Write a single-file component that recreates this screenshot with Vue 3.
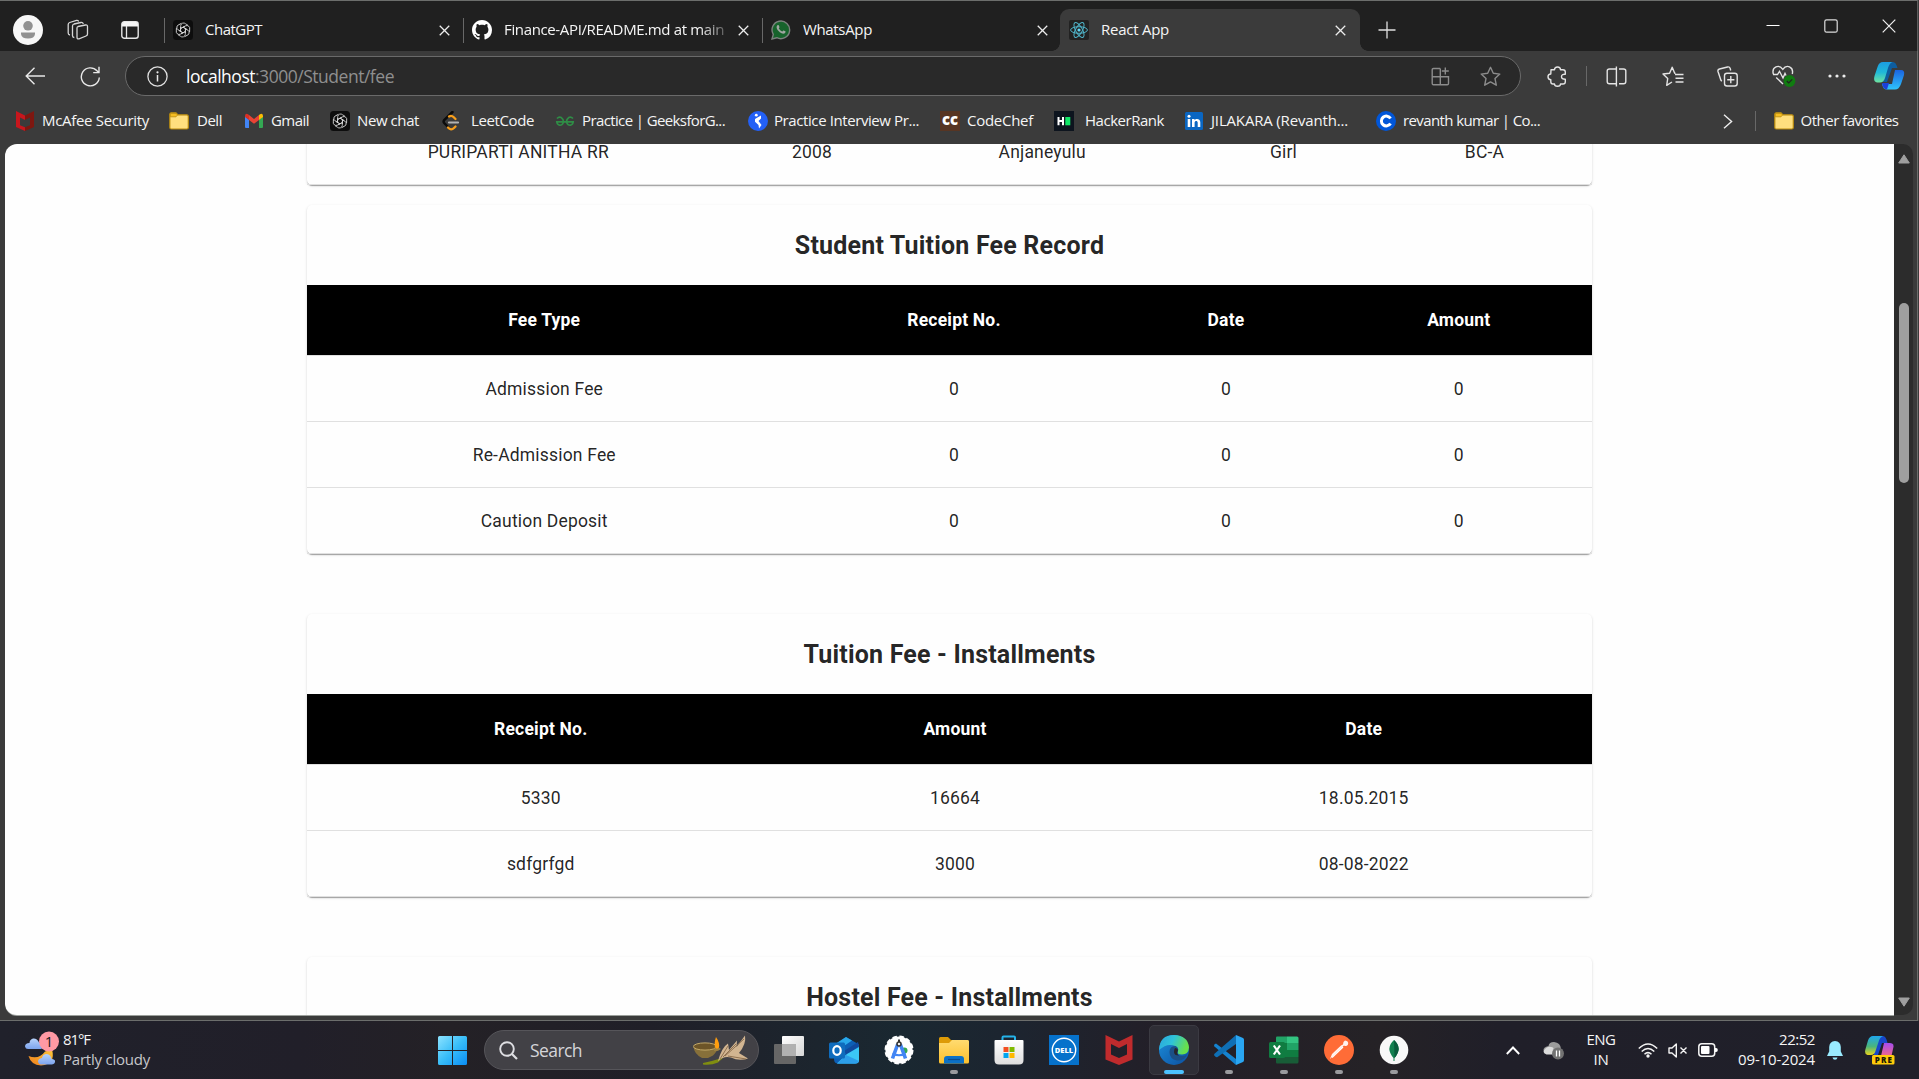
<script setup>
// Spreads a label over a set width by adjusting its letter spacing.
const vFit = {
  mounted(el, { value }) {
    const natural = el.getBoundingClientRect().width
    const count = el.textContent.trim().length
    el.style.letterSpacing = (value - natural) / count + 'px'
  }
}

const tabs = [
  { icon: 'gpt', label: 'ChatGPT', w: 57 },
  { icon: 'github', label: 'Finance-API/README.md at main', w: 220, fade: true },
  { icon: 'whatsapp', label: 'WhatsApp', w: 69 },
  { icon: 'react', label: 'React App', w: 68, active: true }
]

const bookmarks = [
  { icon: 'mcafee', label: 'McAfee Security', w: 107, slot: 154, gap: 7 },
  { icon: 'folder', label: 'Dell', w: 25, slot: 75 },
  { icon: 'gmail', label: 'Gmail', w: 38, slot: 86, gap: 7 },
  { icon: 'gpt', label: 'New chat', w: 62, slot: 111, gap: 7 },
  { icon: 'leet', label: 'LeetCode', w: 63, slot: 114, gap: 10 },
  { icon: 'gfg', label: 'Practice | GeeksforG...', w: 143, slot: 193, gap: 7 },
  { icon: 'prep', label: 'Practice Interview Pr...', w: 145, slot: 192, gap: 6 },
  { icon: 'cc', label: 'CodeChef', w: 66, slot: 114, gap: 7 },
  { icon: 'hr', label: 'HackerRank', w: 79, slot: 130, gap: 11 },
  { icon: 'linkedin', label: 'JILAKARA (Revanth...', w: 137, slot: 192, gap: 7 },
  { icon: 'coursera', label: 'revanth kumar | Co...', w: 137, slot: 170, gap: 7 }
]

const cards = [
  {
    cols: [422.5, 165, 295.5, 187, 215],
    rows: [['PURIPARTI ANITHA RR', '2008', 'Anjaneyulu', 'Girl', 'BC-A']]
  },
  {
    title: 'Student Tuition Fee Record',
    cols: [474.5, 345, 199, 266.5],
    head: ['Fee Type', 'Receipt No.', 'Date', 'Amount'],
    rows: [
      ['Admission Fee', '0', '0', '0'],
      ['Re-Admission Fee', '0', '0', '0'],
      ['Caution Deposit', '0', '0', '0']
    ]
  },
  {
    title: 'Tuition Fee - Installments',
    cols: [467.5, 361, 456.5],
    head: ['Receipt No.', 'Amount', 'Date'],
    rows: [
      ['5330', '16664', '18.05.2015'],
      ['sdfgrfgd', '3000', '08-08-2022']
    ]
  },
  { title: 'Hostel Fee - Installments', cols: [1285], rows: [] }
]
</script>

<template>
  <div class="screen">
    <svg class="defs" width="0" height="0">
      <defs>
        <linearGradient id="gWin" x1="0" y1="0" x2="1" y2="1"><stop offset="0" stop-color="#8de3ff" /><stop offset=".5" stop-color="#38bdf8" /><stop offset="1" stop-color="#0a8df5" /></linearGradient>
        <linearGradient id="gCopA" x1="0" y1="0" x2="0" y2="1"><stop offset="0" stop-color="#1b9de2" /><stop offset=".5" stop-color="#20b8d8" /><stop offset="1" stop-color="#6fe3a0" /></linearGradient>
        <linearGradient id="gCopB" x1="0" y1="0" x2="0" y2="1"><stop offset="0" stop-color="#1b63e0" /><stop offset="1" stop-color="#2fc4fa" /></linearGradient>
        <linearGradient id="gPreA" x1="0" y1="0" x2="0" y2="1"><stop offset="0" stop-color="#1fa7ee" /><stop offset=".55" stop-color="#4ab57c" /><stop offset="1" stop-color="#e9d31b" /></linearGradient>
        <linearGradient id="gPreB" x1="0" y1="0" x2="0" y2="1"><stop offset="0" stop-color="#a44cf0" /><stop offset="1" stop-color="#fb6a7c" /></linearGradient>
        <linearGradient id="gEdge" x1="0" y1="0" x2="1" y2=".3"><stop offset="0" stop-color="#2aa5e0" /><stop offset=".5" stop-color="#2fc3d8" /><stop offset="1" stop-color="#68e04c" /></linearGradient>
        <linearGradient id="gEdgeB" x1="0" y1="0" x2="1" y2="1"><stop offset="0" stop-color="#1c8fdc" /><stop offset="1" stop-color="#0c4f9e" /></linearGradient>
        <linearGradient id="gFold" x1="0" y1="0" x2="0" y2="1"><stop offset="0" stop-color="#ffdb70" /><stop offset="1" stop-color="#fbc02d" /></linearGradient>
        <linearGradient id="gCloud" x1="0" y1="0" x2="0" y2="1"><stop offset="0" stop-color="#b7d2fb" /><stop offset="1" stop-color="#7da4ee" /></linearGradient>
        <linearGradient id="gMoon" x1="0" y1="1" x2="1" y2="0"><stop offset="0" stop-color="#ee7d1b" /><stop offset="1" stop-color="#ffc83b" /></linearGradient>
        <linearGradient id="gBag" x1="0" y1="0" x2="0" y2="1"><stop offset="0" stop-color="#ffffff" /><stop offset="1" stop-color="#dedede" /></linearGradient>
        <linearGradient id="gPane" x1="0" y1="0" x2="1" y2="1"><stop offset="0" stop-color="#ffffff" /><stop offset="1" stop-color="#d6d6d6" /></linearGradient>

        <symbol id="gpt" viewBox="0 0 20 20">
          <rect width="20" height="20" rx="3.5" fill="#0d0d0d" />
          <g fill="none" stroke="#d6d6d6" stroke-width=".85">
            <path v-for="n in 6" :key="n" :transform="`rotate(${n * 60} 10 10)`" d="M10 7.2 12.5 8.700V13M7.700 8.700V5.600A2.900 2.900 0 0 1 12.600 3.800L15 5.300" />
          </g>
        </symbol>
        <symbol id="github" viewBox="0 0 16 16"><path fill="#fff" d="M8 0C3.58 0 0 3.58 0 8c0 3.54 2.29 6.53 5.47 7.59.4.07.55-.17.55-.38 0-.19-.01-.82-.01-1.49-2.01.37-2.53-.49-2.69-.94-.09-.23-.48-.94-.82-1.13-.28-.15-.68-.52-.01-.53.63-.01 1.08.58 1.23.82.72 1.21 1.87.87 2.33.66.07-.52.28-.87.51-1.07-1.78-.2-3.64-.89-3.64-3.95 0-.87.31-1.59.82-2.15-.08-.2-.36-1.02.08-2.12 0 0 .67-.21 2.2.82.64-.18 1.32-.27 2-.27s1.36.09 2 .27c1.53-1.04 2.2-.82 2.2-.82.44 1.1.16 1.92.08 2.12.51.56.82 1.27.82 2.15 0 3.07-1.87 3.75-3.65 3.95.29.25.54.73.54 1.48 0 1.07-.01 1.93-.01 2.2 0 .21.15.46.55.38A8.01 8.01 0 0 0 16 8c0-4.42-3.58-8-8-8Z" /></symbol>
        <symbol id="whatsapp" viewBox="0 0 20 20"><path d="M1 19 2.3 14.4A8.8 8.8 0 1 1 5.800 17.700Z" fill="#17632c" stroke="#7b817d" stroke-width="1.400" /><path d="M6.500 5.300c.5-.5 1.100-.4 1.300.1l.7 1.600c.1.400-.5 1-.7 1.300.7 1.500 2 2.600 3.500 3.200.5-.4.9-1.200 1.300-1.100l1.800.9c.4.3 0 1.400-.6 1.900-1.300.9-3.300.3-5-1C7 10.800 5.800 9 5.600 7.500c-.1-1 .4-1.800.9-2.200Z" fill="#a0a6a1" /></symbol>
        <symbol id="react" viewBox="0 0 20 20"><rect width="20" height="20" rx="2" fill="#222" /><g fill="none" stroke="#4fb4c9" stroke-width="1"><ellipse cx="10" cy="10" rx="8.400" ry="3.300" /><ellipse cx="10" cy="10" rx="8.400" ry="3.300" transform="rotate(60 10 10)" /><ellipse cx="10" cy="10" rx="8.400" ry="3.300" transform="rotate(120 10 10)" /></g><circle cx="10" cy="10" r="1.600" fill="#61dafb" /></symbol>
        <symbol id="mcafee" viewBox="0 0 20 20"><path d="M1 0 10 4.500V9L5 6.500v7.700l5 2V20l-9-4Z" fill="#c8161d" /><path d="M19 0 10 4.500V9l5-2.500v7.700l-5 2V20l9-4Z" fill="#7e1710" /></symbol>
        <symbol id="folder" viewBox="0 0 20 20"><path d="M1 3Q1 1.800 2.200 1.800H7L9 3.800H17.800Q19.300 3.800 19.300 5.200V16.500Q19.300 18 17.800 18H2.300Q.8 18 .8 16.500V3Z" fill="#ffdf7e" stroke="#b98a0c" stroke-width="1.200" /><path d="M1.300 2.400H7L8.600 4 7 5.800H1.300Z" fill="#f5bd22" stroke="#b98a0c" stroke-width=".8" /></symbol>
        <symbol id="gmail" viewBox="0 0 20 20"><path d="M1 5.500 5 8.500V17H2Q1 17 1 16Z" fill="#4285f4" /><path d="M19 5.500 15 8.500V17h3q1 0 1-1Z" fill="#34a853" /><path d="M5 4 10 8 15 4V9L10 12.800 5 9Z" fill="#ea4335" /><path d="M1 5Q1.200 2 4 3.200L5 4V9L1 6Z" fill="#d93025" /><path d="M19 5Q18.800 2 16 3.200L15 4V9L19 6Z" fill="#fbbc04" /></symbol>
        <symbol id="leet" viewBox="0 0 20 20"><path d="M11.500 1 3.200 9Q2 10.500 3.200 12L8 17" fill="none" stroke="#0b0b0b" stroke-width="2.500" stroke-linecap="round" /><path d="M8 5.500Q10.500 4 12.500 6L14.500 8M7 16.500Q10 20 13 17L14.500 15.500" fill="none" stroke="#f79e1b" stroke-width="2.300" stroke-linecap="round" /><path d="M8 11.500H17" stroke="#b3b3b3" stroke-width="2.200" stroke-linecap="round" /></symbol>
        <symbol id="gfg" viewBox="0 0 20 20"><g fill="none" stroke="#2f8d46" stroke-width="1.700"><path d="M2 7.500Q4 5.500 6.300 6.600 8.800 8.500 8.400 11.500 7 14.600 4.500 14.200 2 13.500 1.800 10.800H10" /><path d="M18 7.500Q16 5.500 13.700 6.600 11.200 8.500 11.600 11.500 13 14.600 15.500 14.200 18 13.500 18.200 10.800H10" /></g></symbol>
        <symbol id="prep" viewBox="0 0 20 20"><circle cx="10" cy="10" r="10" fill="#2360f6" /><circle cx="8.300" cy="4.200" r="1.400" fill="#fff" /><path d="M13 4.500V7.500L10.500 10 13.500 14 11 17.500 10.500 14 7 10.800V8L9.500 6.500Z" fill="#fff" /></symbol>
        <symbol id="cc" viewBox="0 0 20 20"><rect width="20" height="20" fill="#573523" /><text x="10" y="14" text-anchor="middle" class="mark" font-size="15" textLength="16" lengthAdjust="spacingAndGlyphs">cc</text></symbol>
        <symbol id="hr" viewBox="0 0 20 20"><rect width="20" height="20" fill="#0d141e" /><path d="M3.500 6h2v3h2.500V6h2v8.300H8V11H5.500v3.300h-2Z" fill="#fff" /><rect x="11.300" y="6" width="5" height="8.300" fill="#0fe666" /></symbol>
        <symbol id="linkedin" viewBox="0 0 20 20"><rect x="1" y="1" width="18" height="18" rx="1.500" fill="#0a66c2" /><circle cx="5" cy="5.200" r="1.500" fill="#fff" /><path d="M3.700 8h2.600v8H3.700ZM8 8h2.500v1.100C11.800 7.200 16.300 7.300 16.300 11.300V16h-2.600v-4.200c0-2.400-3.100-2.200-3.100 0V16H8Z" fill="#fff" /></symbol>
        <symbol id="coursera" viewBox="0 0 20 20"><circle cx="10" cy="10" r="10" fill="#0156d8" /><path d="M14.500 7.500A4.900 4.900 0 1 0 14.500 12.500" fill="none" stroke="#fff" stroke-width="3" /></symbol>
        <symbol id="x" viewBox="0 0 12 12"><path d="M.8.8 11.200 11.200M11.200.8.8 11.200" stroke="#ededed" stroke-width="1.400" fill="none" /></symbol>
      </defs>
    </svg>

    <header class="tabstrip">
      <svg class="profile" width="30" height="30" viewBox="0 0 30 30"><circle cx="15" cy="15" r="15" fill="#f7f7f7" /><circle cx="15" cy="10.800" r="4.800" fill="#919191" /><path d="M8 17.500H22V19Q21.500 23.500 15 23.500T8 19Z" fill="#919191" /></svg>
      <svg class="spaces" width="22" height="22" viewBox="0 0 22 22" fill="none" stroke="#d6d6d6" stroke-width="1.300"><path d="M11 7.500 18.500 6Q20.500 5.700 20.500 7.500V15Q20.500 16.500 19 17L12 19.800Q10 20.300 10 18.300V9Q10 7.800 11 7.500Z" /><path d="M7.300 18.500Q5.500 18.500 5.500 16.800V7Q5.500 5.500 7 5L14 3.500Q16 3.200 16.200 5" /><path d="M3 16Q1.200 15.800 1.200 14V5.500Q1.200 4 2.700 3.500L9.500 1.400Q11.300 1 11.700 2.500" /></svg>
      <svg class="tabact" width="18" height="18" viewBox="0 0 18 18"><rect x=".8" y=".8" width="16.400" height="16.400" rx="2.500" fill="none" stroke="#e6e6e6" stroke-width="1.400" /><path d="M1 3Q1 1 3 1H15Q17 1 17 3V5.500H1Z" fill="#f5f5f5" /><path d="M5.500 5V17" stroke="#e6e6e6" stroke-width="1.300" /></svg>
      <div v-for="t in tabs" :key="t.label" class="tab" :class="{ active: t.active }">
        <svg width="20" height="20"><use :href="'#' + t.icon" /></svg>
        <span class="tablabel" :class="{ fade: t.fade }"><span v-fit="t.w">{{ t.label }}</span></span>
        <svg class="tabx" width="11" height="11"><use href="#x" /></svg>
      </div>
      <svg class="plus" width="18" height="18" viewBox="0 0 18 18"><path d="M9 .5V17.500M.5 9H17.500" stroke="#e0e0e0" stroke-width="1.300" /></svg>
      <div class="winctl">
        <svg width="14" height="14" viewBox="0 0 14 14"><path d="M.5 6.500H13.500" stroke="#fff" stroke-width="1" /></svg>
        <svg width="14" height="14" viewBox="0 0 14 14"><rect x=".8" y=".8" width="12.400" height="12.400" rx="1.800" fill="none" stroke="#dcdcdc" stroke-width="1.200" /></svg>
        <svg width="14" height="14" viewBox="0 0 14 14"><path d="M.7.7 13.300 13.300M13.300.7.7 13.300" stroke="#f0f0f0" stroke-width="1.200" /></svg>
      </div>
    </header>

    <div class="toolbar">
      <svg class="back" width="20" height="18" viewBox="0 0 20 18" fill="none" stroke="#e8e8e8" stroke-width="1.400"><path d="M9.500.8 1.200 9 9.500 17.200M1.200 9H20" /></svg>
      <svg class="reload" width="21" height="21" viewBox="0 0 21 21" fill="none" stroke="#e8e8e8" stroke-width="1.400"><path d="M19.300 11.500A9 9 0 1 1 17 4.800L18.700 6.500M19 .8V6.600H13.200" /></svg>
      <div class="address">
        <svg class="info" width="21" height="21" viewBox="0 0 21 21"><circle cx="10.500" cy="10.500" r="9.600" fill="none" stroke="#e0e0e0" stroke-width="1.300" /><path d="M10.500 9V15.500" stroke="#e8e8e8" stroke-width="1.500" /><circle cx="10.500" cy="6.300" r="1.100" fill="#e8e8e8" /></svg>
        <span class="url"><b v-fit="69">localhost</b><i v-fit="139">:3000/Student/fee</i></span>
        <svg class="addapp" width="19" height="19" viewBox="0 0 19 19" fill="none" stroke="#8c8c8c" stroke-width="1.400"><path d="M9.200 1.500H2.500Q1.200 1.500 1.200 2.800V16.500Q1.200 17.800 2.500 17.800H16.200Q17.500 17.800 17.500 16.500V9.700H1.200M9.300 1.500V17.800M14.300.5V7.500M10.800 4H17.800" /></svg>
        <svg class="star" width="21" height="21" viewBox="0 0 21 21" fill="none" stroke="#8c8c8c" stroke-width="1.400"><path d="M10.500 1.300 13.300 7.300 19.800 8.100 15 12.600 16.300 19.200 10.500 15.900 4.700 19.200 6 12.600 1.200 8.100 7.700 7.300Z" stroke-linejoin="round" /></svg>
      </div>
      <svg class="puzzle" width="21" height="21" viewBox="0 0 21 21" fill="none" stroke="#e4e4e4" stroke-width="1.400"><path d="M4 3.800H7.500Q7.500 1 10.500 1T13.500 3.800H16Q18.300 3.800 18.300 6V8.300Q14.500 8 14.500 10.700T18.300 13.300V15.800Q18.300 18 16 18H13.500Q13.500 20.300 10.500 20.300T7.500 18H6Q3.800 18 3.800 15.800V13.600Q1 13.600 1 10.800T3.800 8Z" stroke-linejoin="round" /></svg>
      <span class="sep"></span>
      <svg class="split" width="21" height="21" viewBox="0 0 21 21" fill="none" stroke="#e4e4e4" stroke-width="1.400"><path d="M7.700 3H3.500Q1.200 3 1.200 5V15.500Q1.200 17.800 3.500 17.800H7.700M13 3H17.500Q19.800 3 19.800 5V15.500Q19.800 17.800 17.500 17.800H13M7.500 3H10.400M7.500 17.800H10.400M10.400.5V20.500" /></svg>
      <svg class="favs" width="22" height="21" viewBox="0 0 22 21" fill="none" stroke="#e4e4e4" stroke-width="1.400" stroke-linejoin="round"><path d="M13.500 7.300H12.700L10.200 1.200 7.600 7.200 1 8 5.700 12.500 4.700 19.300 10 16M13 8.500H21.500M13.500 12.300H21.500M13.500 16H21.500" /></svg>
      <svg class="coll" width="21" height="21" viewBox="0 0 21 21" fill="none" stroke="#e4e4e4" stroke-width="1.400"><rect x="7.500" y="7.300" width="12.700" height="12.700" rx="2.500" /><path d="M13.800 10V17.300M10.200 13.700H17.400M4.800 15.300Q3.800 14.500 3.500 13L1 5.500Q.5 3.500 2.500 3L10.500 1Q12.500.5 13.200 2.500L13.700 4.500" /></svg>
      <svg class="heart" width="24" height="22" viewBox="0 0 24 22" fill="none" stroke="#e4e4e4" stroke-width="1.400"><path d="M1.300 9Q0 3.500 4 1.800 8 .3 10.800 4.300 13.500.3 17.500 1.800 21.500 3.500 20.300 9M1 9.500H5.500L7.500 6.300 11 13 13 8.500 14 10.500M4.200 12.500 11 19" /><circle cx="17.500" cy="16" r="5.900" fill="#107c10" stroke="none" /><path d="M14.800 16 16.700 18 20.200 14.300" stroke="#222" stroke-width="1.200" /></svg>
      <svg class="dots" width="18" height="4" viewBox="0 0 18 4" fill="#ececec"><circle cx="2" cy="2" r="1.600" /><circle cx="9" cy="2" r="1.600" /><circle cx="16" cy="2" r="1.600" /></svg>
      <svg class="copilot" width="31" height="28" viewBox="0 0 31 28"><path d="M9 0H19Q22 0 23.500 6H18L13 20H9L12 4Z" fill="#0e5d9e" /><path d="M8 22H18L21 8H27Q31 8 30 13L27 22Q25 27.500 21 27.500H13Q9 27.500 8 22Z" fill="url(#gCopB)" /><path d="M8 21H15L13 27.500Q9 27.500 8 21Z" fill="#1c3fd8" /><path d="M9 0H18.500Q15.500 1 14 6L11 16Q9.500 20.500 6 20.500H3Q-1 20 .5 14L3.500 5Q5 0 9 0Z" fill="url(#gCopA)" /></svg>
    </div>

    <nav class="bookmarks">
      <div v-for="b in bookmarks" :key="b.label" class="bm" :style="{ width: b.slot + 'px' }">
        <svg width="20" height="20"><use :href="'#' + b.icon" /></svg>
        <span class="bmlabel" :style="{ marginLeft: (b.gap || 8) + 'px' }"><span v-fit="b.w">{{ b.label }}</span></span>
      </div>
      <svg class="more" width="10" height="15" viewBox="0 0 10 15"><path d="M1 .8 8.600 7.500 1 14.200" fill="none" stroke="#eee" stroke-width="1.400" /></svg>
      <span class="sep bmsep"></span>
      <div class="bm other"><svg width="20" height="20"><use href="#folder" /></svg><span class="bmlabel otherlabel"><span v-fit="98">Other favorites</span></span></div>
    </nav>

    <div class="body">
      <main class="page">
        <section v-for="(c, i) in cards" :key="i" class="card">
          <h2 v-if="c.title">{{ c.title }}</h2>
          <div v-if="c.head" class="row head">
            <span v-for="(h, j) in c.head" :key="j" :style="{ width: c.cols[j] + 'px' }">{{ h }}</span>
          </div>
          <div v-for="(r, k) in c.rows" :key="k" class="row">
            <span v-for="(v, j) in r" :key="j" :style="{ width: c.cols[j] + 'px' }">{{ v }}</span>
          </div>
        </section>
      </main>
      <aside class="scroll">
        <svg width="12" height="10" viewBox="0 0 12 10"><path d="M6 .8 11.300 9H.7Z" fill="#9f9f9f" stroke="#9f9f9f" stroke-linejoin="round" /></svg>
        <span class="thumb"></span>
        <svg width="12" height="10" viewBox="0 0 12 10"><path d="M6 9.200 11.300 1H.7Z" fill="#9f9f9f" stroke="#9f9f9f" stroke-linejoin="round" /></svg>
      </aside>
    </div>

    <footer class="taskbar">
      <div class="weather">
        <svg width="36" height="38" viewBox="0 0 36 38">
          <path d="M3 18H16Q19 17 18 13.500 16.500 11 14 11.500 12 7 8 7.500 4.500 8.500 4.500 12 0 12 0 15.500 .5 18 3 18Z" fill="url(#gCloud)" />
          <path d="M27 18.500Q31 33 16 34.500 6 34 3.500 25 14 29 20 20.500Z" fill="url(#gMoon)" />
          <path d="M16 33.500H27Q30.500 33 30 29.500 28.500 27.500 26.500 28 25.500 23 21 23 17.500 23.500 17 27 13 27.500 13 30.500 13.500 33.500 16 33.500Z" fill="url(#gCloud)" />
          <circle cx="24" cy="10.500" r="10" fill="#ff99a4" /><text x="24" y="15.500" text-anchor="middle" class="badge">1</text>
        </svg>
        <div class="wtext"><span><span v-fit="27">81°F</span></span><span class="dim"><span v-fit="87">Partly cloudy</span></span></div>
      </div>
      <svg class="start" width="29" height="29" viewBox="0 0 29 29"><path d="M0 1.500Q0 0 1.500 0H14V14H0ZM15 0H27.500Q29 0 29 1.500V14H15ZM0 15H14V29H1.500Q0 29 0 27.500ZM15 15H29V27.500Q29 29 27.500 29H15Z" fill="url(#gWin)" /></svg>
      <div class="search">
        <svg width="19" height="19" viewBox="0 0 19 19" fill="none" stroke="#dedee2"><circle cx="8" cy="8" r="6.800" stroke-width="1.900" /><path d="M13 13 18 18" stroke-width="2.200" /></svg>
        <span class="slabel"><span v-fit="52">Search</span></span>
        <svg class="lamp" width="57" height="32" viewBox="0 0 57 32">
          <path d="M10 29Q20 27 27 24.500L31 23 25 28.500Q18 31.500 10 30.500Z" fill="#808d10" />
          <path d="M25 27Q29 13 35 9.500L36 16 44 6.500 43.500 13 52 1.500Q53.500 10 46 19L55 24.500Q46 27.500 38 23.500 31 21.500 25 27Z" fill="#d2b591" />
          <path d="M27 25 35 12M30 23 43 10M32 22 51 5M35 22 53 25" stroke="#8f7150" stroke-width="1" fill="none" />
          <path d="M.5 12.500H24Q25 17 20 21.500L15 24H9Q1 20 .5 12.500Z" fill="#87703a" /><ellipse cx="12" cy="12.500" rx="11.700" ry="3.600" fill="#6d5528" stroke="#c3a968" stroke-width="1" />
          <path d="M22 11 28 15Q24 18 21 17Z" fill="#9c8142" /><path d="M23 3Q27 9 26 13.500 24.500 15.500 22.500 14 20.500 10 23 3Z" fill="#ff9e0e" />
        </svg>
      </div>
      <div class="apps">
        <div class="app"><svg width="30" height="28" viewBox="0 0 30 28"><rect x="8" y="0" width="22" height="20" rx="1" fill="url(#gPane)" /><rect x="0" y="8" width="22" height="20" rx="1" fill="#666" /><path d="M8 8H22V20H8Z" fill="#b1b1b1" /></svg></div>
        <div class="app"><svg width="30" height="28" viewBox="0 0 30 28"><path d="M5 9 17 1 30 8.500V24Q30 27.500 26.500 27.500H9Q5 27.500 5 23Z" fill="#0d5fb5" /><path d="M7 7.500 17 1 23 4.500 12 12Z" fill="#28a8ea" /><path d="M15 15 29 6 30 10 18 19Z" fill="#104a9e" /><path d="M30 11V24Q30 27.500 26.500 27.500H8L18 18Z" fill="#3bc8f5" /><path d="M8 27.500 17 19 30 25Q29 27.500 26 27.500Z" fill="#2d9fea" /><rect x="0" y="6.500" width="16" height="16" rx="1.500" fill="#0f6cbd" /><ellipse cx="8" cy="14.500" rx="3.700" ry="4.400" fill="none" stroke="#fff" stroke-width="2.200" /></svg></div>
        <div class="app"><svg width="30" height="30" viewBox="0 0 30 30"><circle cx="15" cy="15" r="13.600" fill="#fff" /><circle cx="15" cy="15" r="13.500" fill="none" stroke="#fff" stroke-width="2" stroke-dasharray="4.500 2.570" /><circle cx="20.500" cy="15.500" r="3" fill="#34a853" /><path d="M13.800 9 8.500 23.500M16.200 9 21.500 23.500" stroke="#4285f4" stroke-width="3.600" /><path d="M8.500 18.500Q15 22 21.500 18.500" fill="none" stroke="#4285f4" stroke-width="2.200" /><circle cx="15" cy="9" r="2" fill="#eee" stroke="#333" stroke-width="1.500" /><path d="M15 4.500V7" stroke="#333" stroke-width="2" /></svg></div>
        <div class="app"><svg width="30" height="30" viewBox="0 0 30 30"><path d="M0 3.500Q0 2 1.500 2H9L12 5H28Q30 5 30 7V14H0Z" fill="#dd9b07" /><path d="M0 8H10L13 5H28.500Q30 5 30 6.500V27Q30 28.500 28.500 28.500H1.500Q0 28.500 0 27Z" fill="url(#gFold)" /><path d="M5 28.500V24Q5 21 8 21H22Q25 21 25 24V28.500Z" fill="#0b71c6" /><path d="M9 24.500H21" stroke="#0a4c8e" stroke-width="1.200" /></svg><i class="ind"></i></div>
        <div class="app"><svg width="30" height="30" viewBox="0 0 30 30"><path d="M8.500 6V2.500Q8.500 1.500 9.500 1.500H20Q21 1.500 21 2.500V6" fill="none" stroke="#24b3ea" stroke-width="2" /><path d="M.5 6Q.5 5 1.500 5H28.500Q29.500 5 29.500 6V25Q29.500 29.500 25 29.500H5Q.5 29.500 .5 25Z" fill="url(#gBag)" /><path d="M9.500 12H14.500V17H9.500Z" fill="#f25022" /><path d="M15.500 12H20.500V17H15.500Z" fill="#7fba00" /><path d="M9.500 18H14.500V23H9.500Z" fill="#00a4ef" /><path d="M15.500 18H20.500V23H15.500Z" fill="#ffb900" /></svg></div>
        <div class="app"><svg width="30" height="30" viewBox="0 0 30 30"><rect width="30" height="30" fill="#0672cb" /><circle cx="15" cy="15" r="11.700" fill="none" stroke="#fff" stroke-width="1.400" /><text x="15" y="17.600" text-anchor="middle" class="mark" font-size="7" textLength="18.500" lengthAdjust="spacingAndGlyphs">DELL</text></svg></div>
        <div class="app"><svg width="28" height="30" viewBox="0 0 28 30"><path d="M.5 0 14 6.500 27.500 0V24.500L14 30 .5 24.500ZM6 9V19.500L14 23 22 19.500V9L14 13Z" fill="#c02b2d" fill-rule="evenodd" /></svg></div>
        <div class="app on"><svg width="30" height="30" viewBox="0 0 30 30"><circle cx="15" cy="15" r="15" fill="url(#gEdgeB)" /><path d="M0 15Q.5 0 15 0 29 .5 30 12.500 29.500 19.500 23 19.500 17.500 19.500 19 16 20 13 16.500 11 8 7.500 0 15Z" fill="url(#gEdge)" /><path d="M10.500 17Q10.500 11 16.500 11 20.500 13.500 18.500 16.500 17 20.500 23 21 26 21 28 19.500 25.500 26 18 25.500 10.500 24 10.500 17Z" fill="#1b4f87" /><path d="M16 13Q20 13.500 18.500 16.500 17.500 19 20 20.500 15 20.500 15 17 15 14.500 16 13Z" fill="#26262e" /></svg><i class="ind wide"></i></div>
        <div class="app"><svg width="30" height="30" viewBox="0 0 30 30"><path d="M2 8.500 22 24V30L.5 11.500Q-.5 10 .7 9.200Z" fill="#1583d0" /><path d="M22 0V9L3.500 22Q2.500 22.500 1.500 21.800L.5 20.800Q-.3 19.800 .5 18.800Z" fill="#0f6fb5" /><path d="M22 0 29 3Q30 3.600 30 5V25Q30 26.400 29 27L22 30Z" fill="#2aa6f2" /></svg><i class="ind"></i></div>
        <div class="app"><svg width="30" height="28" viewBox="0 0 30 28"><path d="M7 1.500Q7 .5 8 .5H18V7H7Z" fill="#21a366" /><path d="M18 .5H28Q29.500 .5 29.500 2V7H18Z" fill="#33c481" /><path d="M7 7H18V21H7Z" fill="#107c41" /><path d="M18 7H29.500V14H18Z" fill="#21a366" /><path d="M18 14H29.500V21H18Z" fill="#107c41" /><path d="M7 21H29.500V26Q29.500 27.500 28 27.500H8Q7 27.500 7 26Z" fill="#185c37" /><rect x="0" y="6" width="16" height="16" rx="1.500" fill="#107c41" /><path d="M4.800 9.500 11 18.500M11 9.500 4.800 18.500" stroke="#fff" stroke-width="2.200" /></svg><i class="ind"></i></div>
        <div class="app"><svg width="30" height="30" viewBox="0 0 30 30"><circle cx="15" cy="15" r="15" fill="#ff6c37" /><path d="M21 5.500Q25 6 24 9.500 22.500 12 20 10.500L12 18 6 24 8 19 17 10.500 19 9.500Q19 6.500 21 5.500Z" fill="#fff" opacity=".92" /><path d="M8 22.500 19 12" stroke="#fff" stroke-width="1.300" /></svg><i class="ind"></i></div>
        <div class="app"><svg width="30" height="30" viewBox="0 0 30 30"><circle cx="15" cy="15" r="14.300" fill="#f8f8f8" /><path d="M15 5Q24 13 15.500 23V26H14.500V23Q6 13 15 5Z" fill="#12804f" /><path d="M15 5Q24 13 15.500 23Z" fill="#0a5c3c" /></svg><i class="ind"></i></div>
      </div>
      <svg class="chev" width="14" height="9" viewBox="0 0 14 9"><path d="M.8 8 7 1.500 13.200 8" fill="none" stroke="#fff" stroke-width="1.900" /></svg>
      <svg class="cloud" width="21" height="19" viewBox="0 0 21 19"><path d="M3 12H13L18 8Q17.500 1.500 11 1 6 1 5.500 5 0 6 .5 9.500Z" fill="#9b9b9b" /><path d="M3.500 13.500H13L10 6.500Q5 4.500 2 8-1.500 12 3.500 13.500Z" fill="#dcdcdc" /><circle cx="15" cy="12.500" r="6" fill="#727272" /><path d="M13.500 9.500V15.500M16.500 9.500V15.500" stroke="#fff" stroke-width="1.300" /></svg>
      <div class="lang"><span><span v-fit="29">ENG</span></span><span><span v-fit="15">IN</span></span></div>
      <svg class="wifi" width="20" height="15" viewBox="0 0 20 15" fill="none" stroke="#f4f4f4" stroke-width="1.500"><path d="M.8 5.500Q10-3.500 19.200 5.500M3.700 8.500Q10 2.500 16.300 8.500M6.500 11.300Q10 8 13.500 11.300" /><circle cx="10" cy="13" r="1.700" fill="#f4f4f4" stroke="none" /></svg>
      <svg class="mute" width="20" height="15" viewBox="0 0 20 15" fill="none" stroke="#f4f4f4" stroke-width="1.400"><path d="M1 5H4L8.300 1V14L4 10H1ZM12.500 4.500 18.500 10.500M18.500 4.500 12.500 10.500" stroke-linejoin="round" /></svg>
      <svg class="batt" width="20" height="14" viewBox="0 0 20 14"><rect x=".8" y=".8" width="15.900" height="12.400" rx="3" fill="none" stroke="#f4f4f4" stroke-width="1.500" /><rect x="3" y="3" width="8.500" height="8" rx="1" fill="#fff" /><path d="M17 5H18Q19.800 5 19.800 7T18 9H17Z" fill="#fff" /></svg>
      <div class="clock"><span><span v-fit="36">22:52</span></span><span><span v-fit="77">09-10-2024</span></span></div>
      <svg class="bell" width="16" height="19" viewBox="0 0 16 19"><path d="M8 0Q13.500 .5 13.800 6V10.500L16 15H0L2.200 10.500V6Q2.500 .5 8 0ZM5.500 16.500H10.500Q10 18.700 8 18.700T5.500 16.500Z" fill="#99ebff" /></svg>
      <svg class="pre" width="30" height="29" viewBox="0 0 30 29"><path d="M9 0H18Q21 0 22.500 7H17L13 19H9Z" fill="#1647c9" /><path d="M10 20H16L19 7H25Q30 7 28 13L26 22H10Z" fill="url(#gPreB)" /><path d="M8 0H18Q14.500 1.500 13.500 6L10.500 15Q9.500 19 6 19H2.500Q-1 18.500 .5 13L3 4.500Q4.500 0 8 0Z" fill="url(#gPreA)" /><rect x="7" y="19" width="22.500" height="9.500" rx="1.500" fill="#ffcb0a" /><text x="18.300" y="26.800" text-anchor="middle" class="pretext" textLength="17">PRE</text></svg>
    </footer>
  </div>
</template>

<style>
html, body { margin: 0; background: #000; overflow: hidden; }
</style>

<style scoped>
* { box-sizing: border-box; }
svg { display: block; flex: none; }
.screen { width: 1919px; height: 1079px; display: flex; flex-direction: column; background: #3b3b3b; color: #f5f5f5; font: 15px/20px "Open Sans", "Noto Sans", sans-serif; overflow: hidden; white-space: nowrap; }
.defs { position: absolute; }
.mark { font-family: "Open Sans", sans-serif; font-weight: 800; fill: #fff; }

.tabstrip { height: 51px; width: 1918px; flex: none; background: #202020; border-top: 1px solid #6c6e6c; border-right: 1px solid #5d5d5d; display: flex; align-items: center; padding: 8px 21px 0 13px; }
.spaces { margin-left: 24px; }
.tabact { margin-left: 32px; margin-right: 25px; }
.tab { width: 299px; height: 42px; display: flex; align-items: center; padding-left: 8px; border-left: 1px solid transparent; position: relative; }
.tab:not(.active)::before { content: ""; position: absolute; left: -1px; top: 9px; width: 1px; height: 25px; background: #686868; }
.tab.active { width: 300px; margin-left: -1px; background: #3b3b3b; border-radius: 9px 9px 0 0; border: 0; padding-left: 9px; }
.tab.active::before, .tab.active::after { content: ""; position: absolute; bottom: 0; width: 8px; height: 8px; }
.tab.active::before { left: -8px; background: radial-gradient(circle at 0 0, transparent 7.5px, #3b3b3b 8px); }
.tab.active::after { right: -8px; background: radial-gradient(circle at 100% 0, transparent 7.5px, #3b3b3b 8px); }
.tablabel { width: 222px; margin-left: 12px; padding-bottom: 2px; display: flex; overflow: hidden; }
.fade { -webkit-mask-image: linear-gradient(90deg, #000 88%, rgba(0, 0, 0, .25) 100%); mask-image: linear-gradient(90deg, #000 88%, rgba(0, 0, 0, .25) 100%); }
.tabx { margin-left: 12px; margin-top: 1px; }
.plus { margin-left: 18px; }
.winctl { margin-left: auto; display: flex; gap: 44px; margin-bottom: 8px; }

.toolbar { height: 50px; flex: none; width: 1918px; border-right: 1px solid #6c6e6c; display: flex; align-items: center; padding-left: 24.5px; }
.reload { margin-left: 35px; }
.address { margin-left: 24.5px; width: 1396px; height: 40px; border: 1px solid #6a6a6a; border-radius: 20px; background: #292929; display: flex; align-items: center; padding-left: 21px; }
.url { margin-left: 18px; width: 1245px; display: flex; font-size: 17.5px; line-height: 24px; padding-bottom: 1px; }
.url b { font-weight: 400; color: #fff; }
.url i { font-style: normal; color: #8f8f8f; }
.star { margin-left: 29.5px; }
.puzzle { margin-left: 25.5px; }
.sep { width: 1px; height: 20px; background: #686868; margin-left: 18.5px; }
.split { margin-left: 19px; }
.favs { margin-left: 34.5px; }
.coll { margin-left: 33px; }
.heart { margin-left: 34px; }
.dots { margin-left: 32px; }
.copilot { margin-left: 28.5px; }

.bookmarks { height: 43px; flex: none; width: 1918px; border-right: 1px solid #6c6e6c; display: flex; align-items: center; padding: 0 0 3px 15px; }
.bm { display: flex; align-items: center; flex: none; }
.bmlabel { display: flex; padding-bottom: 2px; }
.more { margin-left: 176.5px; }
.bmsep { margin-left: 22px; }
.other { margin-left: 18px; }
.otherlabel { margin-left: 7px; }

.body { height: 877px; flex: none; width: 1918px; border-right: 1px solid #6c6e6c; border-bottom: 1px solid #6c6e6c; padding: 0 0 4px 5px; display: flex; }
.page { width: 1889px; height: 872px; background: #fefefe; border-bottom: 1px solid #9b9f9b; border-radius: 12px 0 0 12px; overflow: hidden; padding-left: 302px; font-family: Roboto, sans-serif; color: rgba(0, 0, 0, .87); }
.card { width: 1285px; border-radius: 5px; background: #fefefe; box-shadow: 0 2px 1px -1px rgba(0, 0, 0, .2), 0 1px 1px 0 rgba(0, 0, 0, .14), 0 1px 3px 0 rgba(0, 0, 0, .12); }
.card:first-child { margin-top: -25px; margin-bottom: 20px; }
.card + .card { margin-bottom: 60px; }
.card:last-child { height: 300px; }
h2 { margin: 0; padding: 21px 20px 19px; text-align: center; font: 700 25px/40px Roboto, sans-serif; letter-spacing: .0075em; }
.row { display: flex; height: 66px; padding: 21px 0 19px; border-bottom: 1px solid #e0e0e0; font-size: 17.5px; line-height: 25px; letter-spacing: .01071em; text-align: center; }
.row span { flex: none; }
.head { height: 71px; padding: 20px 0; background: #000; background-clip: padding-box; color: #fff; font-weight: 700; line-height: 30px; }
.scroll { width: 19px; height: 871px; background: #2c2c2c; border-radius: 0 10px 10px 0; display: flex; flex-direction: column; align-items: center; padding: 10px 0 8px; }
.thumb { width: 10px; height: 180px; margin: 139px 0 auto; border-radius: 5px; background: #9f9f9f; }

.taskbar { flex: 1; display: flex; align-items: center; background: linear-gradient(90deg, #20212b 0, #211f29 300px, #242126 450px, #201f28 650px, #1a2831 900px, #1c2530 1000px, #231f28 1160px, #252226 1380px, #201f29 1500px, #20202a 1919px); padding-left: 25px; line-height: 20px; }
.weather { display: flex; width: 413px; height: 50px; align-items: center; }
.badge { font: 15px "Open Sans", sans-serif; fill: #1a1a1a; }
.wtext, .lang, .clock { display: flex; flex-direction: column; padding-bottom: 2px; }
.wtext > span, .lang > span, .clock > span { display: flex; }
.wtext { margin-left: 2px; }
.dim { color: #c7c7cb; }
.start { margin-right: 17px; }
.search { width: 275px; height: 40px; border-radius: 20px; background: #424146; border: 1px solid #56555a; display: flex; align-items: center; padding-left: 14px; }
.slabel { width: 163px; margin-left: 12px; display: flex; font-size: 17.500px; color: #d5d5d9; }
.apps { display: flex; margin-left: 2.500px; }
.app { width: 50px; height: 50px; margin: 0 2.500px; display: flex; align-items: center; justify-content: center; position: relative; border-radius: 5px; border: 1px solid transparent; }
.app:first-child svg { margin-right: 1px; }
.on { background: #2f2e36; border-color: #3b3a42; }
.ind { position: absolute; left: 20px; bottom: 0; width: 8px; height: 4px; border-radius: 2px; background: #9a9a9e; }
.wide { left: 14px; width: 20px; background: #4cc2ff; }
.apps + .chev { margin-left: 84px; }
.cloud { margin-left: 23px; }
.lang { width: 29px; margin-left: 23px; align-items: center; }
.wifi { margin-left: 22.500px; }
.mute { margin-left: 10px; }
.batt { margin-left: 10px; }
.clock { width: 77px; margin-left: 20px; align-items: flex-end; }
.bell { margin-left: 12px; }
.pre { margin-left: 22px; }
.pretext { font: 800 8px "Open Sans", sans-serif; fill: #1d1a05; }
</style>
